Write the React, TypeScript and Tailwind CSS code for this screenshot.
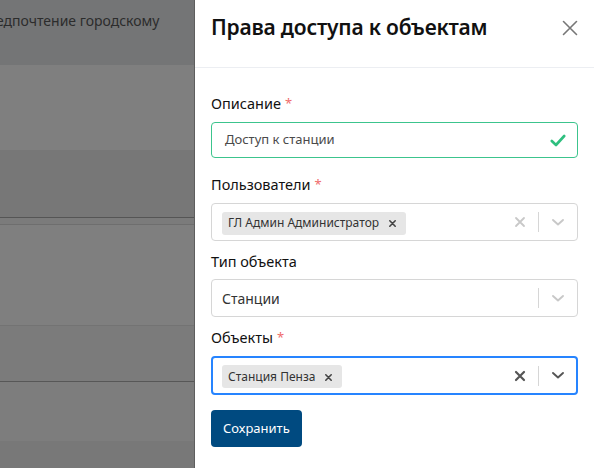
import React from "react";

const font = { fontFamily: '"Noto Sans", "Open Sans", sans-serif' };

function Chip({ label }: { label: string }) {
  return (
    <div className="flex h-[23px] items-center gap-[9px] rounded-[3px] bg-[#e6e6e6] pl-[6px] pr-[9px] text-[12px] text-[#333]">
      <span>{label}</span>
      <svg width="9" height="9" viewBox="0 0 10 10" className="mt-[1px]">
        <path d="M2 2 L8 8 M8 2 L2 8" stroke="#444" strokeWidth="1.8" strokeLinecap="round" />
      </svg>
    </div>
  );
}

function Cross({ color, w = 1.8 }: { color: string; w?: number }) {
  return (
    <svg width="12" height="12" viewBox="0 0 12 12">
      <path d="M2 2 L10 10 M10 2 L2 10" stroke={color} strokeWidth={w} strokeLinecap="round" />
    </svg>
  );
}

function Chevron({ color }: { color: string }) {
  return (
    <svg width="14" height="9" viewBox="0 0 14 9">
      <path d="M2 2 L7 6.5 L12 2" stroke={color} strokeWidth="1.9" fill="none" strokeLinecap="round" strokeLinejoin="round" />
    </svg>
  );
}

function Label({ text, req }: { text: string; req?: boolean }) {
  return (
    <div className="text-[14.5px] leading-[20px] text-[#111]">
      {text}
      {req && <span className="ml-[4px] align-top text-[13px] text-[#ef6b6b]">*</span>}
    </div>
  );
}

export default function App() {
  return (
    <div className="flex h-[468px] w-[594px] overflow-hidden bg-white" style={font}>
      {/* dimmed background page */}
      <div className="flex w-[195px] shrink-0 flex-col overflow-hidden border-r border-[#5e5e5e] bg-[#787878]">
        <div className="h-[65px] whitespace-nowrap bg-[#747576] pt-[10px] text-[14px] text-[#2c2c2c]">
          <span className="ml-[-4px]">едпочтение городскому</span>
        </div>
        <div className="h-[85px] bg-[#7f7f7f]" />
        <div className="h-[67px] bg-[#777777]" />
        <div className="h-[1px] bg-[#555555]" />
        <div className="h-[6px] bg-[#7b7b7b]" />
        <div className="h-[1px] bg-[#6e6e6e]" />
        <div className="h-[100px] bg-[#7f7f7f]" />
        <div className="h-[1px] bg-[#737373]" />
        <div className="h-[55px] bg-[#7b7b7b]" />
        <div className="h-[1px] bg-[#575757]" />
        <div className="h-[59px] bg-[#7d7d7d]" />
        <div className="flex-1 bg-[#787878]" />
      </div>

      {/* drawer */}
      <div className="flex flex-1 flex-col bg-white">
        <div className="flex h-[68px] items-center justify-between border-b border-[#eceef2] pl-[16px] pr-[16px]">
          <div className="mt-[-11px] text-[21px] font-semibold tracking-[-0.2px] text-[#111]">
            Права доступа к объектам
          </div>
          <div className="mt-[-11px]">
            <svg width="16" height="16" viewBox="0 0 16 16">
              <path d="M1.5 1.5 L14.5 14.5 M14.5 1.5 L1.5 14.5" stroke="#777" strokeWidth="1.6" strokeLinecap="round" />
            </svg>
          </div>
        </div>

        <div className="flex flex-col px-[16px] pt-[25px]">
          <Label text="Описание" req />
          <div className="mt-[9px] flex h-[36px] items-center justify-between rounded-[4px] border border-[#3cc48d] pl-[13px] pr-[11px]">
            <span className="text-[13px] text-[#4a4a4a]">Доступ к станции</span>
            <svg width="16" height="13" viewBox="0 0 16 13">
              <path d="M1.8 7 L6 11 L14.2 2" stroke="#2fbf7f" strokeWidth="2.6" fill="none" strokeLinecap="round" strokeLinejoin="round" />
            </svg>
          </div>

          <div className="mt-[16px]">
            <Label text="Пользователи" req />
          </div>
          <div className="mt-[9px] flex h-[38px] items-center rounded-[4px] border border-[#d6d6d6] pl-[10px]">
            <div className="flex-1">
              <div className="inline-flex">
                <Chip label="ГЛ Админ Администратор" />
              </div>
            </div>
            <div className="flex items-center pr-[12px]">
              <Cross color="#c8c8c8" />
              <div className="mx-[12px] h-[20px] w-[1px] bg-[#d6d6d6]" />
              <Chevron color="#c8c8c8" />
            </div>
          </div>

          <div className="mt-[10px]">
            <Label text="Тип объекта" />
          </div>
          <div className="mt-[8px] flex h-[38px] items-center rounded-[4px] border border-[#d6d6d6] pl-[10px]">
            <div className="flex-1 text-[14px] text-[#333]">Станции</div>
            <div className="flex items-center pr-[12px]">
              <div className="mx-[12px] h-[20px] w-[1px] bg-[#d6d6d6]" />
              <Chevron color="#c8c8c8" />
            </div>
          </div>

          <div className="mt-[10px]">
            <Label text="Объекты" req />
          </div>
          <div className="mt-[9px] flex h-[39px] items-center rounded-[4px] border-2 border-[#2684ff] pl-[9px]">
            <div className="flex-1">
              <div className="inline-flex">
                <Chip label="Станция Пенза" />
              </div>
            </div>
            <div className="flex items-center pr-[11px]">
              <Cross color="#555" w={2.2} />
              <div className="mx-[12px] h-[20px] w-[1px] bg-[#d6d6d6]" />
              <Chevron color="#555" />
            </div>
          </div>

          <div className="mt-[15px]">
            <button className="h-[37px] rounded-[4px] bg-[#004a80] px-[12px] text-[13px] text-white">
              Сохранить
            </button>
          </div>
        </div>
      </div>
    </div>
  );
}
